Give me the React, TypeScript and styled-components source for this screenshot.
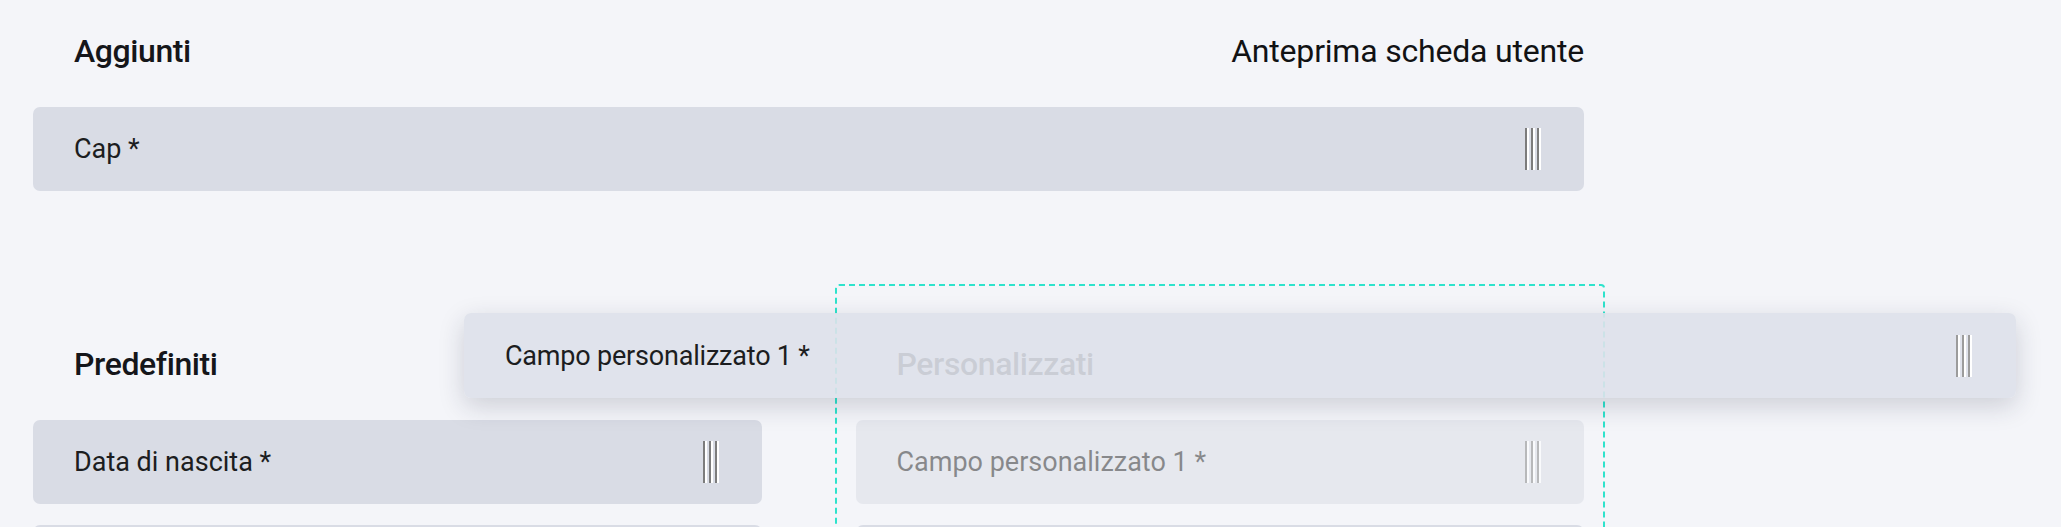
import styled, { createGlobalStyle } from "styled-components";

/**
 * Field layout editor: the "Aggiunti" list on top, the two drop zones
 * (Predefiniti / Personalizzati) below, and a field being dragged.
 */

interface Field {
  id: string;
  label: string;
  required?: boolean;
}

const addedFields: Field[] = [{ id: "cap", label: "Cap", required: true }];

const defaultFields: Field[] = [
  { id: "birth", label: "Data di nascita", required: true },
  { id: "phone", label: "Telefono", required: true },
];

const customFields: Field[] = [
  { id: "custom-1", label: "Campo personalizzato 1", required: true },
  { id: "custom-2", label: "Campo personalizzato 2" },
];

const GlobalStyle = createGlobalStyle`
  html, body {
    margin: 0;
    padding: 0;
    background: #f4f5f9;
    overflow: hidden;
  }
  body {
    font-family: Roboto, "Noto Sans", sans-serif;
    -webkit-font-smoothing: antialiased;
  }
`;

const Page = styled.div`
  position: relative;
  width: 1551px;
  padding: 31px 0 0 33px;
`;

const Header = styled.div`
  display: flex;
  align-items: center;
  justify-content: space-between;
  padding-left: 41px;
`;

const SectionTitle = styled.h2`
  margin: 0;
  font-size: 32px;
  font-weight: 500;
  line-height: 40px;
  letter-spacing: -0.4px;
  color: #15161a;
`;

const PreviewLabel = styled.span`
  font-size: 32px;
  font-weight: 400;
  line-height: 40px;
  letter-spacing: -0.2px;
  color: #111214;
`;

const FieldList = styled.div`
  display: flex;
  flex-direction: column;
  gap: 21px;
  margin-top: 36px;
`;

const FieldCard = styled.div<{ $ghost?: boolean }>`
  box-sizing: border-box;
  height: 84px;
  display: flex;
  align-items: center;
  justify-content: space-between;
  padding: 0 43px 0 41px;
  background: #d9dce5;
  border-radius: 7px;
  font-size: 27px;
  color: #1c1d20;
  opacity: ${(p) => (p.$ghost ? 0.5 : 1)};
`;

const BottomGrid = styled.div`
  display: grid;
  grid-template-columns: 1fr 1fr;
  column-gap: 52px;
  margin: 93px -21px 0;
`;

const DropZone = styled.div<{ $active?: boolean }>`
  min-height: 420px;
  padding: 19px;
  border: 2px dashed ${(p) => (p.$active ? "#2ee3cc" : "transparent")};
  border-radius: 4px;
`;

const ZoneHeader = styled.div`
  padding: 39px 0 0 41px;
`;

const DragOverlay = styled.div`
  position: absolute;
  left: 464px;
  top: 313px;
  box-sizing: border-box;
  width: 1552px;
  height: 85px;
  display: flex;
  align-items: center;
  justify-content: space-between;
  padding: 0 44px 0 41px;
  background: rgba(222, 225, 234, 0.9);
  border-radius: 7px;
  box-shadow: 0 8px 26px rgba(30, 36, 60, 0.18);
  font-size: 27px;
  letter-spacing: -0.2px;
  color: #1c1d20;
`;

const HandleSvg = styled.svg`
  flex-shrink: 0;
  display: block;
`;

function DragHandle({ light }: { light?: boolean }) {
  const dark = light ? "#9c9c9c" : "#7c7c7c";
  return (
    <HandleSvg width="16" height="42" viewBox="0 0 16 42" aria-hidden="true">
      {[0, 6, 12].map((x) => (
        <g key={x}>
          <rect x={x} y="0" width="2" height="42" fill={dark} />
          <rect x={x + 2} y="0" width="2" height="42" fill="#ffffff" />
        </g>
      ))}
    </HandleSvg>
  );
}

function fieldLabel(field: Field) {
  return field.required ? `${field.label} *` : field.label;
}

export default function App() {
  return (
    <>
      <GlobalStyle />
      <Page>
        <Header>
          <SectionTitle>Aggiunti</SectionTitle>
          <PreviewLabel>Anteprima scheda utente</PreviewLabel>
        </Header>
        <FieldList>
          {addedFields.map((f) => (
            <FieldCard key={f.id}>
              <span>{fieldLabel(f)}</span>
              <DragHandle />
            </FieldCard>
          ))}
        </FieldList>

        <BottomGrid>
          <DropZone>
            <ZoneHeader>
              <SectionTitle>Predefiniti</SectionTitle>
            </ZoneHeader>
            <FieldList>
              {defaultFields.map((f) => (
                <FieldCard key={f.id}>
                  <span>{fieldLabel(f)}</span>
                  <DragHandle />
                </FieldCard>
              ))}
            </FieldList>
          </DropZone>

          <DropZone $active>
            <ZoneHeader>
              <SectionTitle>Personalizzati</SectionTitle>
            </ZoneHeader>
            <FieldList>
              {customFields.map((f, i) => (
                <FieldCard key={f.id} $ghost={i === 0}>
                  <span>{fieldLabel(f)}</span>
                  <DragHandle />
                </FieldCard>
              ))}
            </FieldList>
          </DropZone>
        </BottomGrid>

        <DragOverlay>
          <span>Campo personalizzato 1 *</span>
          <DragHandle light />
        </DragOverlay>
      </Page>
    </>
  );
}
